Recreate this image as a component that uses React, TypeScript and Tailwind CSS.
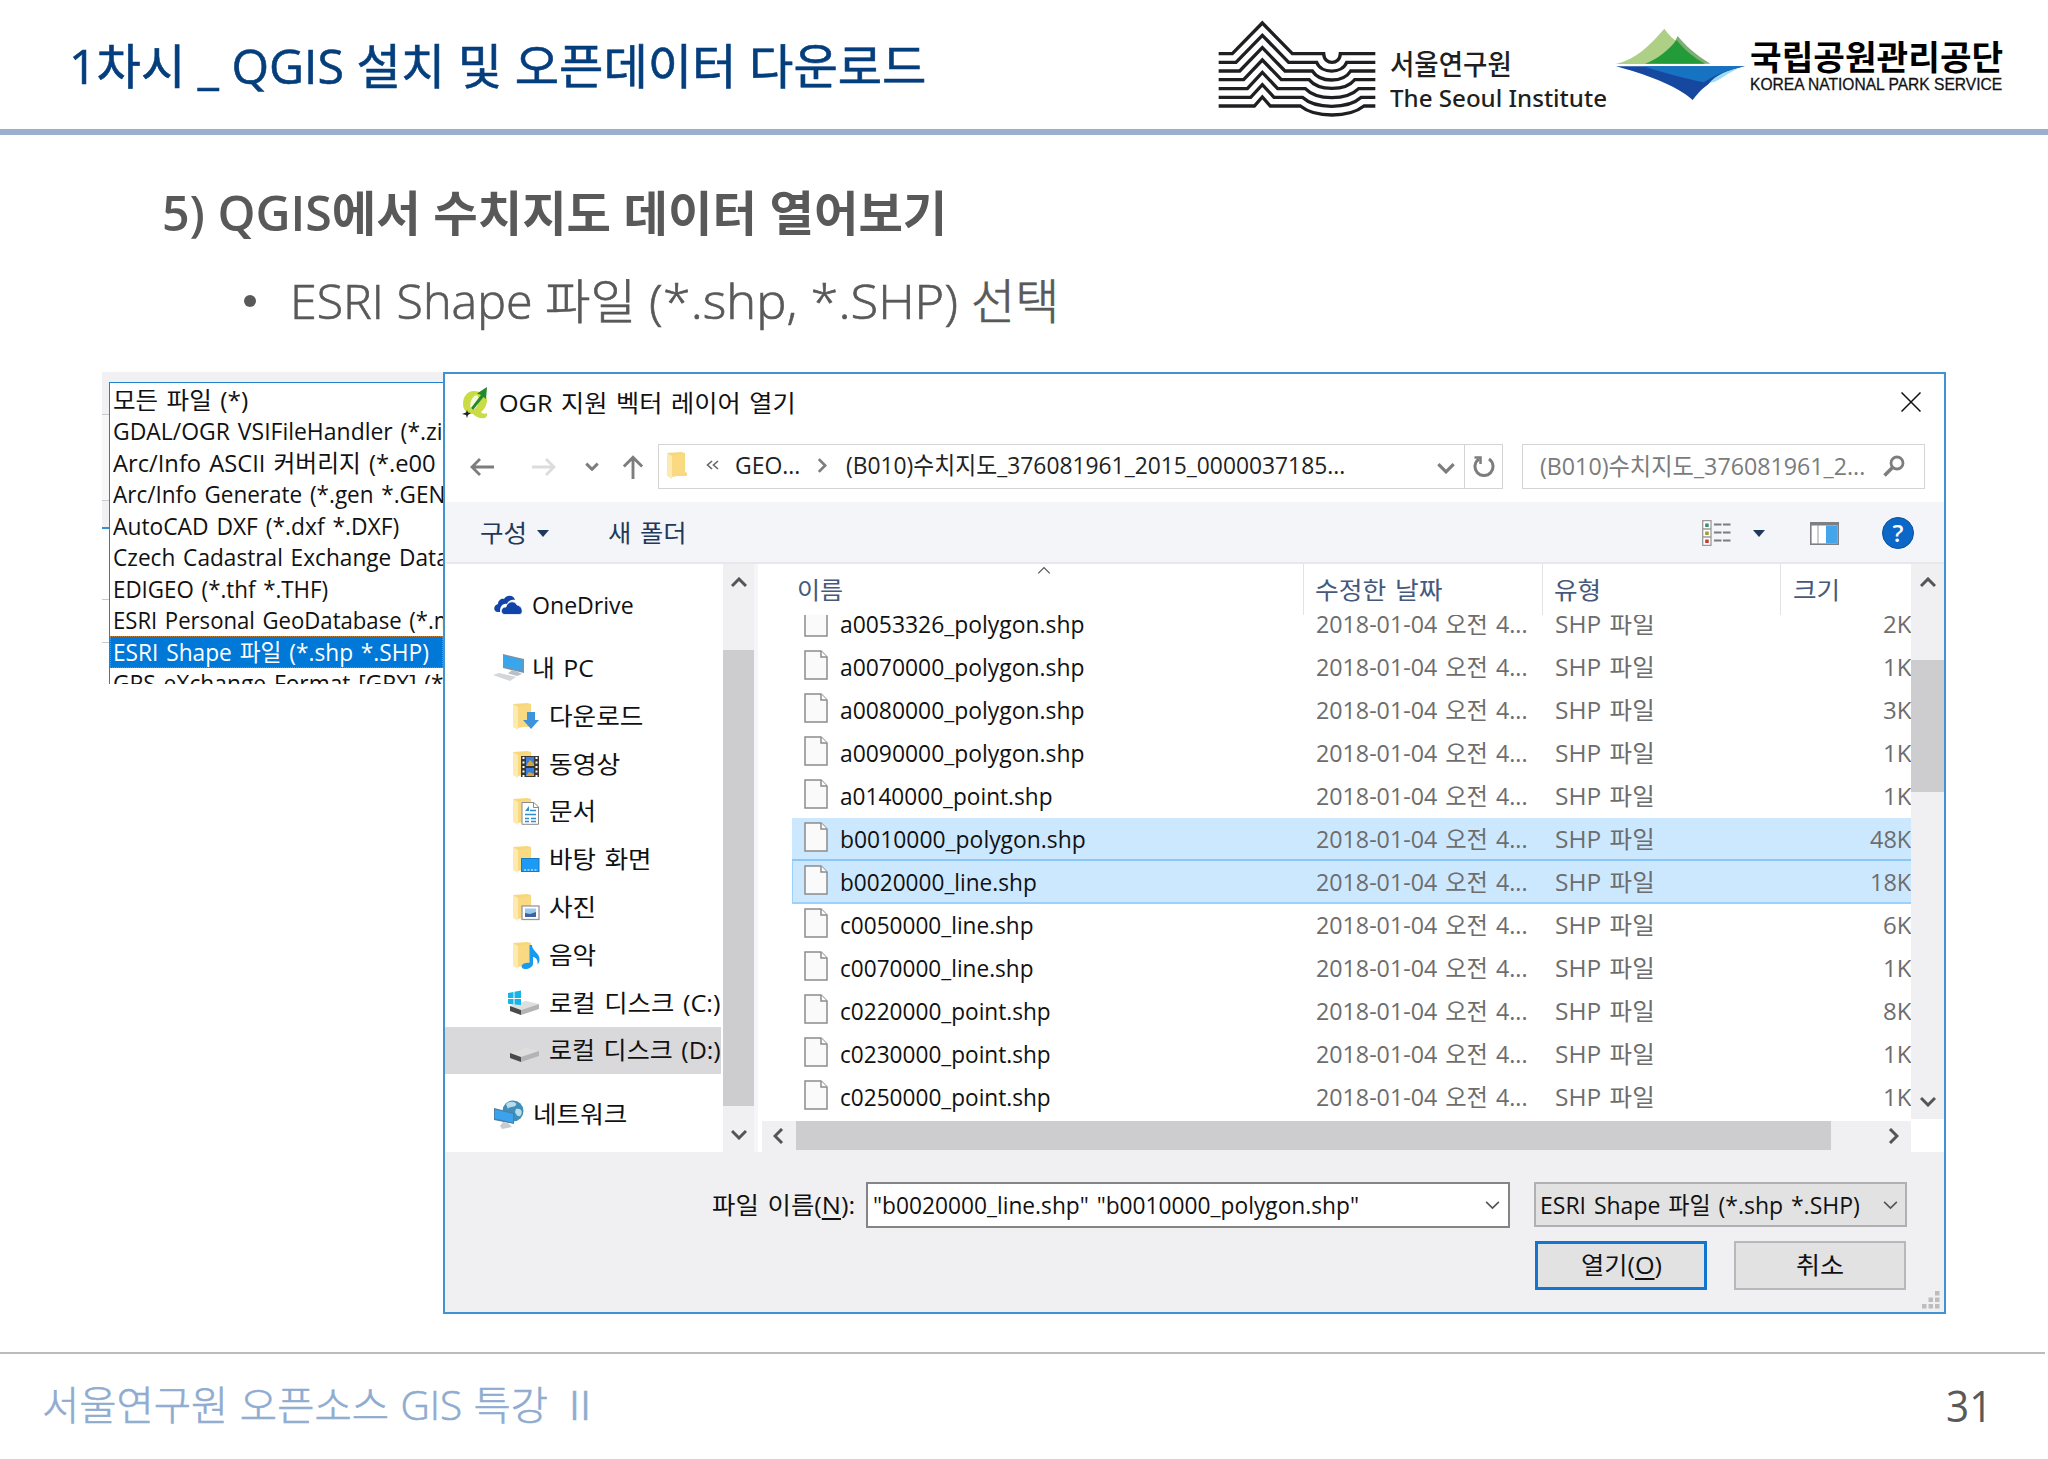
import { useLayoutEffect, useRef, useState } from "react";
import type { ReactNode } from "react";

/** One line of text, condensed or widened so that it fills `w` pixels. */
function Fit({ w, className = "", children }: { w: number; className?: string; children: ReactNode }) {
  const ref = useRef<HTMLSpanElement>(null);
  const [k, setK] = useState(1);
  useLayoutEffect(() => {
    if (ref.current) setK(w / ref.current.offsetWidth);
  }, [w]);
  return (
    <span className={`block shrink-0 ${className}`} style={{ width: w }}>
      <span ref={ref} className="inline-block origin-left whitespace-pre" style={{ transform: `scaleX(${k})` }}>
        {children}
      </span>
    </span>
  );
}

function Chevron({ dir, className = "", stroke = 3 }: { dir: "up" | "down" | "left" | "right"; className?: string; stroke?: number }) {
  const d = {
    up: "M1 9 L8 2 L15 9",
    down: "M1 2 L8 9 L15 2",
    left: "M9 1 L2 8 L9 15",
    right: "M2 1 L9 8 L2 15",
  }[dir];
  const flat = dir === "up" || dir === "down";
  return (
    <svg viewBox={flat ? "0 0 16 11" : "0 0 11 16"} className={`shrink-0 ${className}`} fill="none" stroke="currentColor" strokeWidth={stroke}>
      <path d={d} />
    </svg>
  );
}

function SeoulLogo() {
  const rows = [
    "M56 161 H97 L187 69 L277 161 H371 C372 196 420 196 421 161 H526",
    "M56 187 H108 L187 106 L266 187 H350 C364 222 426 222 440 187 H526",
    "M56 213 H119 L187 143 L255 213 H337 C360 249 430 249 452 213 H526",
    "M56 239 H131 L187 180 L244 239 H327 C356 274 436 274 464 239 H526",
    "M56 266 H142 L187 217 L233 266 H316 C350 302 440 302 476 266 H526",
    "M56 292 H152 L187 254 L222 292 H307 C346 328 444 328 484 292 H526",
    "M56 318 H163 L187 291 L211 318 H301 C346 354 446 354 492 318 H526",
  ];
  return (
    <svg viewBox="54 60 474 294" className="h-[98px] w-[158px] shrink-0" fill="none" stroke="#1f1f21" strokeWidth="10">
      {rows.map((d) => (
        <path key={d} d={d} />
      ))}
    </svg>
  );
}

function ParkLogo() {
  return (
    <svg viewBox="45 83 390 219" className="h-[73px] w-[130px] shrink-0">
      <path d="M48 191 C110 175 150 135 193 85 C205 103 220 116 236 128 L190 191 Z" fill="#adcf86" />
      <path d="M233 107 C255 135 290 165 331 190 H190 Z" fill="#7fae72" />
      <path d="M135 190 C170 178 205 150 230 119 C250 145 280 172 315 190 Z" fill="#249b39" />
      <path d="M300 243 C350 262 360 225 430 198 H340 Z" fill="#9edcf5" />
      <path d="M48 198 H435 C385 208 345 225 325 252 C300 270 290 285 278 299 C230 255 130 220 48 198 Z" fill="#1748a0" />
      <path d="M130 198 H435 C385 208 348 222 312 246 C260 236 190 218 130 198 Z" fill="#1673c2" />
    </svg>
  );
}

const FILTERS: [string, number][] = [
  ["모든 파일 (*)", 135],
  ["GDAL/OGR VSIFileHandler (*.zi", 330],
  ["Arc/Info ASCII 커버리지 (*.e00", 323],
  ["Arc/Info Generate (*.gen *.GEN", 332],
  ["AutoCAD DXF (*.dxf *.DXF)", 286],
  ["Czech Cadastral Exchange Data", 336],
  ["EDIGEO (*.thf *.THF)", 215],
  ["ESRI Personal GeoDatabase (*.m", 341],
  ["ESRI Shape 파일 (*.shp *.SHP)", 316],
  ["GPS eXchange Format [GPX] (*", 331],
];

function FilterList() {
  return (
    <div className="flex h-[312px] w-[341px] shrink-0 overflow-hidden bg-[#f1f1f3]">
      <div className="flex w-[7px] shrink-0 flex-col">
        <div className="h-[43px] border-b border-[#c9c9cb]" />
        <div className="h-[86px] border-b border-[#c9c9cb] bg-[#f7f7f8]" />
        <div className="h-[28px] border-b-2 border-[#3a8fd2]" />
        <div className="h-[71px] border-b border-[#c9c9cb] bg-white" />
        <div className="h-[43px] border-b border-[#c9c9cb] bg-white" />
        <div className="grow bg-white" />
      </div>
      <div className="mt-[10px] grow overflow-hidden border-t border-l border-[#1f80cc] bg-white pt-px">
        {FILTERS.map(([name, w], i) => (
          <div
            key={name}
            className={
              i === 8
                ? "flex h-[31.5px] items-center bg-[#0078d7] pl-[3px] text-white outline-1 -outline-offset-1 outline-dotted outline-[#c08040]"
                : "flex h-[31.5px] items-center pl-[3px] text-[#111]"
            }
          >
            <Fit w={w} className="-mt-px text-[24px] leading-[31px] [word-spacing:2px]">
              {name}
            </Fit>
          </div>
        ))}
      </div>
    </div>
  );
}

function QIcon() {
  return (
    <svg viewBox="0 0 26 32" className="h-[32px] w-[26px] shrink-0">
      <path d="M12 4 C5 4 1 10 1 17 C1 23 5 27 11 27 C14 30 18 32 23 31 C25 30 25 28 25 26 C23 27 20 27 19 25 C23 22 25 17 25 13 C25 8 19 4 12 4 Z" fill="#c9dc45" />
      <ellipse cx="12.500" cy="15.500" rx="3.800" ry="7.500" transform="rotate(18 12.500 15.500)" fill="#f7f9df" />
      <path d="M9 21 L19 8 L15 6.500 L25 0 L24 12 L21.500 10 L11 23 Z" fill="#218a2d" />
      <path d="M0 27 L4 25.500 L5 23 L6 25.500 L9 26 L6 28 L5 31 L4 28 Z" fill="#222" />
    </svg>
  );
}

function FolderBase() {
  return (
    <>
      <path d="M0 2 L14 1 L18 2 V24 L4 26 L0 24 Z" fill="#f7d77c" />
      <path d="M0 2 L5 5 V28 L0 25 Z" fill="#fdeab0" />
      <path d="M5 5 L17 2 V20 L20 22 V25 H5 Z" fill="#f9d982" />
    </>
  );
}

type Badge = "down" | "video" | "doc" | "desk" | "pic" | "music";

function Folder({ badge }: { badge: Badge }) {
  return (
    <svg viewBox="0 0 27 28" className="h-[28px] w-[27px] shrink-0">
      <FolderBase />
      {badge === "down" && <path d="M14 10 H22 V18 H26 L18 27 L10 18 H14 Z" fill="#3f93dc" />}
      {badge === "video" && (
        <>
          <rect x="8" y="6" width="18" height="21" fill="#3a3632" />
          <rect x="13" y="7" width="8" height="9" fill="#3d7fe0" />
          <rect x="13" y="18" width="8" height="8" fill="#3d7fe0" />
          <path d="M13 16 L17 10 L21 14 V16 Z M13 26 L16 22 L21 24 V26 Z" fill="#d9a531" />
          <path d="M10.500 7 V27 M23.500 7 V27" stroke="#fff" strokeWidth="2" strokeDasharray="2 2.500" />
        </>
      )}
      {badge === "doc" && (
        <>
          <path d="M9 5.500 H21 L25.500 10 V27.300 H9 Z" fill="#fff" stroke="#8a8a8a" />
          <path d="M20.500 6 V10.500 H25" fill="none" stroke="#8a8a8a" />
          <path d="M12 14 L16 9 V14 Z" fill="#2b8fd0" />
          <path d="M17 13.500 H23 M12 17.500 H23 M12 21.500 H16 M18 21.500 H23 M12 24.500 H16 M18 24.500 H23" stroke="#2b8fd0" strokeWidth="1.500" />
        </>
      )}
      {badge === "desk" && (
        <>
          <rect x="8.500" y="13.500" width="17.500" height="13" fill="#1b9bf5" stroke="#1579c4" />
          <path d="M11 25 H24" stroke="#fff" strokeDasharray="2 1.500" />
        </>
      )}
      {badge === "pic" && (
        <>
          <rect x="9" y="13" width="17" height="13.500" fill="#fff" stroke="#98989c" strokeWidth="1.300" />
          <rect x="12" y="15.500" width="11" height="8.500" fill="#9cc9ef" />
          <path d="M12 24 V20 L17 21 L23 19 V24 Z" fill="#39679b" />
        </>
      )}
      {badge === "music" && (
        <path d="M16.500 4 H19 C19 10 27 12 26.500 19 C26.500 21 25.500 22.500 24.500 23 C25 18 22 16 20 16 V22 C20 26 16 28 12 28 C7.500 28 8 23.500 11 22.500 C13 21.700 15 21.500 16.500 22 Z" fill="#169bf3" />
      )}
    </svg>
  );
}

function CloudIcon() {
  return (
    <svg viewBox="0 0 30 20" className="h-[20px] w-[30px] shrink-0" fill="#1243a8">
      <path d="M7 17 H5 C0 17 0 10 5 9 C5 5 9 3 11 4 C14 -1 21 0 22 5 C18 4 15 6 14 9 C9 8 7 12 7 17 Z" />
      <path d="M12 19.500 C7 19.500 7 12 13 12 C14 6 22 5 24 10 C30 11 31 19.500 26 19.500 Z" stroke="#fff" strokeWidth=".8" />
    </svg>
  );
}

function PcIcon() {
  return (
    <svg viewBox="0 0 31 28" className="h-[28px] w-[31px] shrink-0">
      <path d="M10 0 L31 5 V19 L10 14 Z" fill="#7d93a3" />
      <path d="M11 1.500 L29.500 6 V17 L11 12.500 Z" fill="#38a5ec" />
      <path d="M19 16 L24 17.500 L29 20 L24 22 L15 19.500 Z" fill="#b9c1c6" />
      <path d="M0 21 L6 19 L23 23 L17 27 Z" fill="#d5d6d8" />
    </svg>
  );
}

function DriveIcon({ win }: { win?: boolean }) {
  return (
    <svg viewBox="0 0 31 26" className="h-[26px] w-[31px] shrink-0">
      <path d="M2 16 L18 11 L31 14 L13 20 Z" fill="#dededf" />
      <path d="M13 20 L31 14 V19 L13 25 Z" fill="#b4b4b6" />
      <path d="M2 16 L13 20 V25 L2 21 Z" fill="#4a4a4b" />
      {win && <path d="M0 3 L5.500 2 V8 H0 Z M6.500 1.800 L13 .6 V8 H6.500 Z M0 9 H5.500 V14.500 L0 13.700 Z M6.500 9 H13 V15 L6.500 14.600 Z" fill="#17b4e6" />}
    </svg>
  );
}

function NetworkIcon() {
  return (
    <svg viewBox="0 0 30 29" className="h-[29px] w-[30px] shrink-0">
      <circle cx="19" cy="11" r="10.500" fill="#3f8fb8" />
      <path d="M12 4 C16 0 24 2 22 5 C20 8 15 6 14 9 Z M22 9 C27 8 29 11 27 15 C25 18 22 15 21 12 Z" fill="#b9dcec" />
      <path d="M0 8 L20 13 V24 L0 20 Z" fill="#4d7fa6" />
      <path d="M1 9.500 L19 14 V22.500 L1 18.500 Z" fill="#3ba3ee" />
      <path d="M9 22 L14 23 L18 27 L8 29 L6 26 Z" fill="#c6ccd0" />
    </svg>
  );
}

const PLACES: { icon: ReactNode; name: string; w: number; drive?: boolean; active?: boolean }[] = [
  { icon: <Folder badge="down" />, name: "다운로드", w: 94 },
  { icon: <Folder badge="video" />, name: "동영상", w: 71 },
  { icon: <Folder badge="doc" />, name: "문서", w: 47 },
  { icon: <Folder badge="desk" />, name: "바탕 화면", w: 103 },
  { icon: <Folder badge="pic" />, name: "사진", w: 47 },
  { icon: <Folder badge="music" />, name: "음악", w: 47 },
  { icon: <DriveIcon win />, name: "로컬 디스크 (C:)", w: 171, drive: true },
  { icon: <DriveIcon />, name: "로컬 디스크 (D:)", w: 172, drive: true, active: true },
];

function Sidebar() {
  return (
    <nav className="flex w-[276px] shrink-0 flex-col overflow-hidden pt-[17px] text-[24px] leading-[34px] text-[#111]">
      <div className="flex h-[48px] items-center gap-[9px] pl-[48px]">
        <CloudIcon />
        <Fit w={102}>OneDrive</Fit>
      </div>
      <div className="mt-[15px] flex h-[48px] items-center gap-[8px] pl-[48px]">
        <PcIcon />
        <Fit w={62}>내 PC</Fit>
      </div>
      {PLACES.map((p) => (
        <div
          key={p.name}
          className={`flex h-[47.8px] shrink-0 items-center ${p.drive ? "gap-[10px] pl-[63px]" : "gap-[9px] pl-[68px]"} ${p.active ? "bg-[#d9d8da]" : ""}`}
        >
          {p.icon}
          <Fit w={p.w}>{p.name}</Fit>
        </div>
      ))}
      <div className="mt-[16px] flex h-[48px] items-center gap-[9px] pl-[49px]">
        <NetworkIcon />
        <Fit w={94}>네트워크</Fit>
      </div>
    </nav>
  );
}

const FILES: [string, number, string, number][] = [
  ["a0053326_polygon.shp", 244, "2K", 28],
  ["a0070000_polygon.shp", 244, "1K", 28],
  ["a0080000_polygon.shp", 244, "3K", 28],
  ["a0090000_polygon.shp", 244, "1K", 28],
  ["a0140000_point.shp", 213, "1K", 28],
  ["b0010000_polygon.shp", 246, "48K", 41],
  ["b0020000_line.shp", 197, "18K", 41],
  ["c0050000_line.shp", 194, "6K", 28],
  ["c0070000_line.shp", 194, "1K", 28],
  ["c0220000_point.shp", 211, "8K", 28],
  ["c0230000_point.shp", 211, "1K", 28],
  ["c0250000_point.shp", 211, "1K", 28],
];

function FileIcon() {
  return (
    <svg viewBox="0 0 24 30" className="-mt-[4px] h-[30px] w-[24px] shrink-0" fill="#fafafa" stroke="#8c8c8c" strokeWidth="1.500">
      <path d="M1 1 H17 L23 7 V29 H1 Z" />
      <path d="M17 1 V7 H23" fill="#fff" />
    </svg>
  );
}

function FileList() {
  return (
    <div className="flex w-[1149px] shrink-0 flex-col bg-white">
      <div className="flex h-[51px] shrink-0 text-[24px] leading-[34px] text-[#46597c]">
        <div className="relative w-[542px] border-r border-[#e3e3e6] pt-[9px] pl-[35px]">
          <Fit w={46}>이름</Fit>
          <Chevron dir="up" stroke={1.500} className="absolute top-[2px] left-[274px] h-[9px] w-[16px] text-[#555]" />
        </div>
        <div className="w-[239px] border-r border-[#e3e3e6] pt-[9px] pl-[11px]">
          <Fit w={128}>수정한 날짜</Fit>
        </div>
        <div className="w-[238px] border-r border-[#e3e3e6] pt-[9px] pl-[11px]">
          <Fit w={47}>유형</Fit>
        </div>
        <div className="pt-[9px] pl-[12px]">
          <Fit w={47}>크기</Fit>
        </div>
      </div>
      <div className="h-[506px] overflow-hidden text-[24px] leading-[34px]">
        <div className="-mt-[12.5px] ml-[30px]">
          {FILES.map(([name, w, size, sw], i) => (
            <div
              key={name}
              className={`flex h-[43px] items-center ${
                i === 5
                  ? "border-b-2 border-[#8cc6f5] bg-[#cce8ff] pt-px pl-[12px]"
                  : i === 6
                    ? "border-b-2 border-l border-[#99d1ff] bg-[#cce8ff] pt-px pl-[11px]"
                    : "pb-px pl-[12px]"
              }`}
            >
              <FileIcon />
              <Fit w={w} className="ml-[12px] text-[#111]">
                {name}
              </Fit>
              <div className="flex grow justify-end text-[#6d6d6d]">
                <div className="w-[239px]">
                  <Fit w={212}>2018-01-04 오전 4...</Fit>
                </div>
                <div className="w-[238px]">
                  <Fit w={100}>SHP 파일</Fit>
                </div>
                <div className="flex w-[118px] justify-end">
                  <Fit w={sw}>{size}</Fit>
                </div>
              </div>
            </div>
          ))}
        </div>
      </div>
      <div className="flex h-[31px] items-center bg-[#f0eff1] text-[#555]">
        <div className="mb-[2px] flex w-[34px] shrink-0 justify-center pr-px">
          <Chevron dir="left" className="h-[16px] w-[11px]" />
        </div>
        <div className="mb-[2px] h-[29px] w-[1035px] bg-[#cdcccf]" />
        <div className="mb-[2px] flex grow justify-end pr-[12px]">
          <Chevron dir="right" className="h-[16px] w-[11px]" />
        </div>
      </div>
    </div>
  );
}

function AddressBar() {
  return (
    <div className="mt-[12px] flex h-[44px] items-center text-[24px] leading-[34px]">
      <svg viewBox="0 0 24 20" className="mt-px ml-[25px] h-[20px] w-[24px] shrink-0" fill="none" stroke="#7d7d7d" strokeWidth="2.800">
        <path d="M24 10 H2 M10 2 L2 10 L10 18" />
      </svg>
      <svg viewBox="0 0 24 20" className="mt-px ml-[38px] h-[20px] w-[24px] shrink-0" fill="none" stroke="#dcdcdc" strokeWidth="2.800">
        <path d="M0 10 H22 M14 2 L22 10 L14 18" />
      </svg>
      <Chevron dir="down" stroke={3.500} className="mt-px ml-[29px] h-[9px] w-[14px] text-[#7d7d7d]" />
      <svg viewBox="0 0 22 26" className="mt-[3px] ml-[23px] h-[25px] w-[22px] shrink-0" fill="none" stroke="#7d7d7d" strokeWidth="3">
        <path d="M11 25 V3 M1.500 12 L11 2.500 L20.500 12" />
      </svg>
      <div className="ml-[14px] flex h-[45px] w-[845px] shrink-0 items-center border border-[#d4d4d4] pl-[8px] text-[#222]">
        <svg viewBox="0 0 20 28" className="-mt-[2px] h-[28px] w-[20px] shrink-0">
          <FolderBase />
        </svg>
        <svg viewBox="0 0 13 10" className="-mt-[2px] ml-[19px] h-[10px] w-[13px] shrink-0" fill="none" stroke="#666" strokeWidth="1.600">
          <path d="M6 1 L1.500 5 L6 9 M12 1 L7.500 5 L12 9" />
        </svg>
        <Fit w={65} className="-mt-[2px] ml-[16px]">
          GEO...
        </Fit>
        <Chevron dir="right" className="-mt-[2px] ml-[17px] h-[15px] w-[10px] text-[#7d7d7d]" />
        <Fit w={499} className="-mt-[2px] ml-[19px]">
          (B010)수치지도_376081961_2015_0000037185...
        </Fit>
        <div className="flex h-full grow items-center justify-end border-r border-[#d4d4d4] pr-[9px]">
          <Chevron dir="down" className="mt-[3px] h-[12px] w-[18px] text-[#7d7d7d]" />
        </div>
        <div className="flex w-[37px] shrink-0 justify-center">
          <svg viewBox="0 0 22 24" className="mt-px h-[24px] w-[22px]" fill="none" stroke="#7d7d7d" strokeWidth="3">
            <path d="M16 4 A9 9 0 1 1 6 4" />
            <path d="M1.500 2.500 H7.500 V9" strokeWidth="2.500" />
          </svg>
        </div>
      </div>
      <div className="ml-[19px] flex h-[45px] w-[403px] shrink-0 items-center border border-[#d4d4d4] pl-[17px] text-[#7b7b7b]">
        <Fit w={325}>(B010)수치지도_376081961_2...</Fit>
        <svg viewBox="0 0 22 22" className="ml-[18px] h-[22px] w-[22px] shrink-0" fill="none" stroke="#7d7d7d">
          <circle cx="14" cy="8" r="6" strokeWidth="2.800" />
          <path d="M9.500 12.500 L1.500 20.500" strokeWidth="3.500" />
        </svg>
      </div>
    </div>
  );
}

function Toolbar() {
  return (
    <div className="mt-[14px] flex h-[62px] items-center border-b-2 border-[#e7e8ec] bg-[#f4f5f8] pt-[2px] text-[24px] leading-[34px] text-[#1e395b]">
      <Fit w={47} className="ml-[35px]">
        구성
      </Fit>
      <svg viewBox="0 0 12 7" className="ml-[10px] h-[7px] w-[12px] shrink-0" fill="#1e395b">
        <path d="M0 0 H12 L6 7 Z" />
      </svg>
      <Fit w={78} className="ml-[59px]">
        새 폴더
      </Fit>
      <svg viewBox="0 0 30 26" className="ml-auto h-[26px] w-[30px] shrink-0">
        <path d="M.7 .7 H9 V25.300 H.7 Z M.7 9 H9 M.7 17 H9" fill="#fff" stroke="#9a9a9a" strokeWidth="1.300" />
        <rect x="3.200" y="3.500" width="3.500" height="3.500" fill="#3c8a74" />
        <rect x="3.200" y="11.500" width="3.500" height="3.500" fill="#97a02d" />
        <rect x="3.200" y="19.500" width="3.500" height="3.500" fill="#c63a35" />
        <path d="M12 4.500 H29 M12 12.500 H29 M12 20.500 H29" stroke="#7c7c7c" strokeWidth="1.800" strokeDasharray="7.500 1.500" />
      </svg>
      <svg viewBox="0 0 12 7" className="ml-[21px] h-[7px] w-[12px] shrink-0" fill="#1e395b">
        <path d="M0 0 H12 L6 7 Z" />
      </svg>
      <svg viewBox="0 0 29 23" className="ml-[45px] h-[23px] w-[29px] shrink-0">
        <rect x=".8" y=".8" width="27.400" height="21.400" fill="#fff" stroke="#7f7f83" strokeWidth="1.600" />
        <path d="M1 2 H28" stroke="#7f7f83" strokeWidth="3" />
        <path d="M8 3 V22" stroke="#9a9a9a" />
        <rect x="16" y="3.500" width="11.500" height="18" fill="#45a5ea" />
      </svg>
      <div className="mr-[30px] ml-[43px] flex h-[32px] w-[32px] shrink-0 items-center justify-center rounded-full border border-[#0b4f96] bg-[#0b68c8] font-semibold text-white">
        ?
      </div>
    </div>
  );
}

function Dialog() {
  return (
    <section className="flex h-[942px] w-[1503px] shrink-0 flex-col border-2 border-[#3f93d3] bg-white [word-spacing:2px]">
      <header className="flex h-[58px] items-center text-[24px] leading-[34px] text-[#111]">
        <div className="ml-[17px]">
          <QIcon />
        </div>
        <Fit w={297} className="-mt-px ml-[11px]">
          OGR 지원 벡터 레이어 열기
        </Fit>
        <svg viewBox="0 0 20 20" className="-mt-[2px] mr-[23px] ml-auto h-[20px] w-[20px]" fill="none" stroke="#111" strokeWidth="1.500">
          <path d="M.5 .5 L19.500 19.500 M19.500 .5 L.5 19.500" />
        </svg>
      </header>
      <AddressBar />
      <Toolbar />
      <div className="flex h-[588px] shrink-0">
        <Sidebar />
        <div className="ml-[2px] flex w-[31px] shrink-0 flex-col items-center bg-[#f0eff1] text-[#555]">
          <div className="flex h-[86px] items-start pt-[13px]">
            <Chevron dir="up" className="h-[11px] w-[16px]" />
          </div>
          <div className="h-[456px] w-full bg-[#cdcccf]" />
          <div className="mt-auto pb-[12px]">
            <Chevron dir="down" className="block h-[11px] w-[16px]" />
          </div>
        </div>
        <div className="w-[8px] shrink-0 border-r-4 border-white bg-[#f6f6f8]" />
        <FileList />
        <div className="flex grow flex-col bg-white">
          <div className="flex h-[555px] flex-col items-center bg-[#f0eff1] text-[#555]">
            <div className="flex h-[96px] items-start pt-[13px]">
              <Chevron dir="up" className="h-[11px] w-[16px]" />
            </div>
            <div className="h-[132px] w-full bg-[#cdcccf]" />
            <div className="mt-auto pb-[12px]">
              <Chevron dir="down" className="block h-[11px] w-[16px]" />
            </div>
          </div>
        </div>
      </div>
      <footer className="flex grow flex-col bg-[#f0eff1] text-[24px] leading-[34px] text-[#111]">
        <div className="mt-[30px] flex h-[46px]">
          <Fit w={143} className="ml-[267px] pt-[6px]">
            파일 이름(<span className="underline underline-offset-4">N</span>):
          </Fit>
          <div className="ml-[11px] flex h-[46px] w-[644px] shrink-0 items-center border-2 border-[#858585] bg-white pl-[5px]">
            <Fit w={486}>"b0020000_line.shp" "b0010000_polygon.shp"</Fit>
            <Chevron dir="down" stroke={1.800} className="mr-[8px] ml-auto h-[10px] w-[15px] text-[#555]" />
          </div>
          <div className="ml-[24px] flex h-[45px] w-[373px] shrink-0 items-center border-2 border-[#b0b0b2] bg-[#e2e2e3] pl-[4px]">
            <Fit w={320}>ESRI Shape 파일 (*.shp *.SHP)</Fit>
            <Chevron dir="down" stroke={1.800} className="mr-[7px] ml-auto h-[10px] w-[15px] text-[#555]" />
          </div>
        </div>
        <div className="mt-[13px] flex h-[49px] justify-end pr-[38px]">
          <div className="flex w-[172px] items-center justify-center border-3 border-[#1276d0] bg-[#e2e2e3] pb-px">
            <Fit w={81}>
              열기(<span className="underline underline-offset-4">O</span>)
            </Fit>
          </div>
          <div className="ml-[27px] flex w-[172px] items-center justify-center border-2 border-[#b8b8ba] bg-[#e2e2e3] pb-px">
            <Fit w={48}>취소</Fit>
          </div>
        </div>
        <svg viewBox="0 0 19 19" className="mr-[4px] ml-auto h-[19px] w-[19px]" fill="#bdbdbf">
          <path d="M14 1h4.500v4.500H14z M7.500 7.500H12V12H7.500z M14 7.500h4.500V12H14z M1 14h4.500v4.500H1z M7.500 14H12v4.500H7.500z M14 14h4.500v4.500H14z" />
        </svg>
      </footer>
    </section>
  );
}

export default function App() {
  return (
    <div className="flex h-[1459px] w-[2048px] flex-col overflow-hidden bg-white font-['Open_Sans','Noto_Sans_CJK_KR',sans-serif]">
      <header className="flex h-[135px] shrink-0 border-b-6 border-[#9ab0cc]">
        <Fit w={857} className="ml-[69px] pt-[32px] text-[48px] leading-[68px] text-[#043e7c] [-webkit-text-stroke:0.6px]">
          1차시 _ QGIS 설치 및 오픈데이터 다운로드
        </Fit>
        <div className="mt-[20px] ml-[292px]">
          <SeoulLogo />
        </div>
        <div className="mt-[47px] ml-[14px] flex w-[216px] flex-col text-[#1f1f21]">
          <Fit w={122} className="text-[28px] leading-[34px] font-medium">
            서울연구원
          </Fit>
          <Fit w={217} className="font-['Noto_Sans',sans-serif] text-[24px] leading-[34px] font-medium">
            The Seoul Institute
          </Fit>
        </div>
        <div className="mt-[28px] ml-[9px]">
          <ParkLogo />
        </div>
        <div className="mt-[36px] ml-[5px] flex flex-col">
          <Fit w={253} className="text-[34px] leading-[42px] font-bold text-black">
            국립공원관리공단
          </Fit>
          <Fit w={252} className="-mt-px font-['Liberation_Sans',sans-serif] text-[16.5px] leading-[14px] text-[#111] [-webkit-text-stroke:0.3px]">
            KOREA NATIONAL PARK SERVICE
          </Fit>
        </div>
      </header>

      <main className="flex h-[1217px] shrink-0 flex-col text-[#595959]">
        <Fit w={785} className="mt-[44px] ml-[162px] text-[48px] leading-[68px] font-semibold">
          5) QGIS에서 수치지도 데이터 열어보기
        </Fit>
        <div className="mt-[20px] flex h-[68px] items-center text-[48px] leading-[68px] font-light [-webkit-text-stroke:0.7px]">
          <div className="ml-[244px] h-[12px] w-[12px] rounded-full bg-[#595959]" />
          <Fit w={255} className="ml-[34px]">
            {"ESRI Shape "}
          </Fit>
          <Fit w={104}>{"파일 "}</Fit>
          <Fit w={322}>{"(*.shp, *.SHP) "}</Fit>
          <Fit w={88}>선택</Fit>
        </div>
        <div className="mt-[37px] ml-[102px] flex">
          <FilterList />
          <Dialog />
        </div>
      </main>

      <footer className="mr-[3px] flex grow items-start justify-between border-t-2 border-[#bcbcbe] pt-[21px]">
        <Fit w={558} className="ml-[42px] text-[40px] leading-[60px] font-light text-[#8fabd0] [-webkit-text-stroke:0.6px] [word-spacing:1px]">
          서울연구원 오픈소스 GIS 특강 Ⅱ
        </Fit>
        <Fit w={46} className="mr-[53px] text-[44px] leading-[60px] text-[#595959]">
          31
        </Fit>
      </footer>
    </div>
  );
}
